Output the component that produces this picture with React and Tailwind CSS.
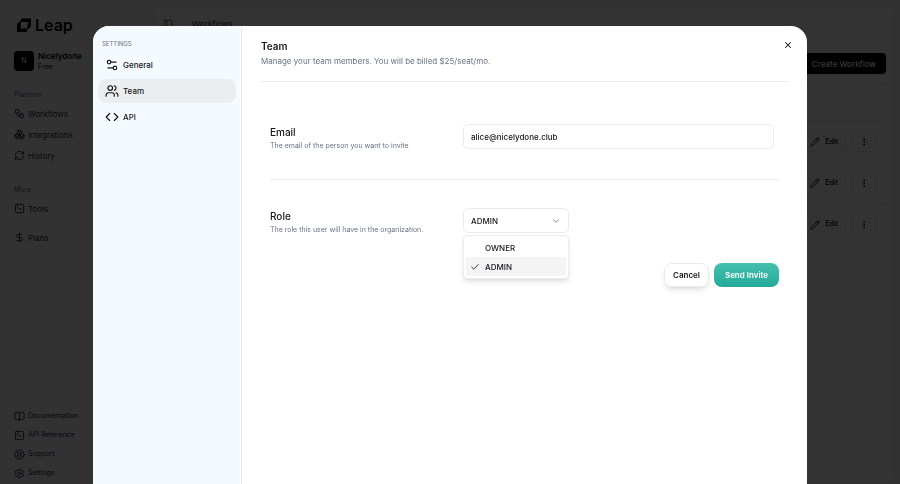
import { useState } from "react";
import {
  BookOpen,
  Boxes,
  Check,
  ChevronDown,
  Code,
  DollarSign,
  EllipsisVertical,
  LifeBuoy,
  PanelLeft,
  Pencil,
  RefreshCw,
  Settings,
  Settings2,
  SquareTerminal,
  Users,
  Workflow,
  X,
} from "lucide-react";

const platformLinks = [
  { label: "Workflows", icon: Workflow },
  { label: "Integrations", icon: Boxes },
  { label: "History", icon: RefreshCw },
];

const supportLinks = [
  { label: "Documentation", icon: BookOpen },
  { label: "API Reference", icon: SquareTerminal },
  { label: "Support", icon: LifeBuoy },
  { label: "Settings", icon: Settings },
];

const tabs = [
  { label: "General", icon: Settings2 },
  { label: "Team", icon: Users },
  { label: "API", icon: Code },
];

const roles = ["OWNER", "ADMIN"];

function Logo() {
  return (
    <div className="flex items-center gap-[3px] pl-[2px]">
      <svg viewBox="0 0 16 16" className="size-4" fill="currentColor">
        <path d="M6 1.500h9v6c0 3-1 4-4 4.500l1-7H4.500c0-2 .5-3.500 1.500-3.500z" />
        <path d="M10 15H1V9c0-3 1-4 4-4.500L4.500 11.500h7c0 2-.5 3.500-1.500 3.500z" />
      </svg>
      <span className="text-[16px] leading-5 font-semibold">Leap</span>
    </div>
  );
}

function SideLink({ label, icon: Icon }) {
  return (
    <a href="#" className="flex h-[21px] items-center gap-[3px] text-[8px] text-gray-800">
      <Icon className="size-[11px]" strokeWidth={2} />
      {label}
    </a>
  );
}

function Sidebar() {
  return (
    <aside className="flex w-[153px] shrink-0 flex-col px-[14px] pt-[15px] pb-px">
      <Logo />

      <div className="mt-4 flex items-center gap-1">
        <div className="flex size-5 items-center justify-center rounded bg-black text-[7px] text-white">N</div>
        <div>
          <p className="text-[8px] leading-[11px] font-semibold">Nicelydone</p>
          <p className="text-[7px] leading-[9px]">Free</p>
        </div>
      </div>

      <p className="mt-[19px] mb-[3px] text-[7px] leading-[10px] text-gray-500">Platform</p>
      <nav>
        {platformLinks.map((link) => <SideLink key={link.label} {...link} />)}
      </nav>

      <p className="mt-[19px] mb-[3px] text-[7px] leading-[10px] text-gray-500">More</p>
      <nav className="flex flex-col gap-2">
        <SideLink label="Tools" icon={SquareTerminal} />
        <SideLink label="Plans" icon={DollarSign} />
      </nav>

      <nav className="mt-auto">
        {supportLinks.map(({ label, icon: Icon }) => (
          <a key={label} href="#" className="flex h-[19px] items-center gap-[3px] text-[7px] text-gray-800">
            <Icon className="size-[11px]" strokeWidth={2} />
            {label}
          </a>
        ))}
      </nav>
    </aside>
  );
}

function WorkflowsPage() {
  return (
    <main className="mt-1 mr-[5px] flex-1 rounded-md border border-gray-200 bg-white">
      <header className="flex h-[38px] items-center gap-[9px] border-b border-gray-200 px-[9px] text-[8px] font-medium text-gray-600">
        <button aria-label="Toggle sidebar">
          <PanelLeft className="size-[10px]" />
        </button>
        <span className="h-3 w-px bg-gray-200" />
        <span>Workflows</span>
      </header>

      <div className="px-2">
        <div className="flex justify-end border-b border-gray-200 pt-[10px] pb-[9px]">
          <button className="h-[21px] rounded bg-black px-[10px] text-[8px] font-medium text-white">
            Create Workflow
          </button>
        </div>
        <div className="h-[38px] border-b border-gray-200" />
        {[1, 2, 3].map((row) => (
          <div key={row} className="flex h-[41px] items-center justify-end gap-[5px] border-b border-gray-200 pr-[10px] last:border-0">
            <button className="flex h-5 items-center gap-[5px] rounded border border-gray-200 px-[7px] text-[7px] font-medium">
              <Pencil className="size-[10px]" />
              Edit
            </button>
            <button aria-label="More" className="flex h-5 w-[25px] items-center justify-center rounded border border-gray-200">
              <EllipsisVertical className="size-[10px]" />
            </button>
          </div>
        ))}
      </div>
    </main>
  );
}

function RoleSelect() {
  const [role, setRole] = useState("ADMIN");
  const [open, setOpen] = useState(true);

  const pick = (value) => {
    setRole(value);
    setOpen(false);
  };

  // the native popup is replaced by the styled list below
  const toggle = (e) => {
    e.preventDefault();
    setOpen(!open);
  };

  return (
    <div className="relative w-[106px]">
      <select
        id="role"
        value={role}
        onChange={(e) => setRole(e.target.value)}
        onMouseDown={toggle}
        className="block h-[25px] w-full appearance-none rounded-[5px] border border-[#ebebeb] bg-white px-[7px] text-[8px] font-medium text-zinc-900 outline-none"
      >
        {roles.map((r) => <option key={r}>{r}</option>)}
      </select>
      <ChevronDown className="pointer-events-none absolute top-2 right-2 size-[10px] text-gray-500" />

      {open && (
        <ul role="listbox" aria-label="Role" className="absolute top-[27px] left-0 w-full rounded border border-[#ebebeb] bg-white p-[2px] shadow-md">
          {roles.map((r) => (
            <li key={r} role="option" aria-selected={r === role}>
              <button
                type="button"
                onClick={() => pick(r)}
                className={`flex h-[19px] w-full items-center gap-[5px] rounded-[3px] px-1 text-[8px] font-medium text-zinc-900 ${r === role ? "bg-[#f4f4f5]" : ""}`}
              >
                <span className="w-[10px]">{r === role && <Check className="size-[10px]" />}</span>
                {r}
              </button>
            </li>
          ))}
        </ul>
      )}
    </div>
  );
}

function SettingsModal() {
  const [tab, setTab] = useState("Team");
  const [email, setEmail] = useState("alice@nicelydone.club");

  return (
    <div className="fixed inset-0 flex bg-black/80 px-[93px] pt-[26px]">
      <div role="dialog" aria-label="Settings" className="flex flex-1 overflow-hidden rounded-t-2xl bg-white text-zinc-900">
        <aside className="w-[149px] shrink-0 border-r border-[#ebebeb] bg-[#f5fafe] px-[5px] pt-[13px]">
          <p className="mb-1 pl-1 text-[6px] leading-[10px] text-gray-500">SETTINGS</p>
          <nav className="flex flex-col gap-[2px]">
            {tabs.map(({ label, icon: Icon }) => (
              <button
                key={label}
                onClick={() => setTab(label)}
                className={`flex h-6 items-center gap-1 rounded-lg px-[7px] text-[8px] font-medium ${tab === label ? "bg-[#ebeef1]" : ""}`}
              >
                <Icon className="size-[14px]" strokeWidth={2} />
                {label}
              </button>
            ))}
          </nav>
        </aside>

        <section className="flex-1 px-[19px] pt-[13px]">
          <header className="flex items-start justify-between border-b border-[#ebebeb] pb-3">
            <div>
              <h2 className="text-[10px] leading-[14px] font-semibold">Team</h2>
              <p className="text-[8px] leading-4 text-gray-500">
                Manage your team members. You will be billed $25/seat/mo.
              </p>
            </div>
            <button aria-label="Close" className="-mr-[5px] pt-px">
              <X className="size-[10px]" strokeWidth={2.5} />
            </button>
          </header>

          <form className="px-[9px]" onSubmit={(e) => e.preventDefault()}>
            <div className="flex items-start border-b border-[#ebebeb] pt-[42px] pb-[27px]">
              <div className="w-[193px] shrink-0">
                <label htmlFor="email" className="block text-[10px] leading-[16px] font-medium">Email</label>
                <p className="text-[7px] leading-3 text-gray-500">The email of the person you want to invite</p>
              </div>
              <input
                id="email"
                type="email"
                value={email}
                onChange={(e) => setEmail(e.target.value)}
                className="mr-[5px] h-[25px] min-w-0 flex-1 rounded-[5px] border border-[#ebebeb] px-[7px] text-[8px] font-medium outline-none"
              />
            </div>

            <div className="flex items-start pt-7">
              <div className="w-[193px] shrink-0">
                <label htmlFor="role" className="block text-[10px] leading-[16px] font-medium">Role</label>
                <p className="text-[7px] leading-3 text-gray-500">The role this user will have in the organization.</p>
              </div>
              <RoleSelect />
            </div>

            <div className="mt-[27px] flex justify-end gap-[5px]">
              <button type="button" className="h-6 rounded-lg border border-[#ebebeb] px-2 text-[8px] font-semibold shadow-md">
                Cancel
              </button>
              <button type="submit" className="h-6 rounded-lg bg-linear-to-b from-[#45bfae] to-[#22ab9a] px-[11px] text-[8px] font-semibold text-white">
                Send Invite
              </button>
            </div>
          </form>
        </section>
      </div>
    </div>
  );
}

export default function App() {
  return (
    <div className="flex min-h-screen bg-[#fafafa] font-['Inter',sans-serif] text-black">
      <Sidebar />
      <WorkflowsPage />
      <SettingsModal />
    </div>
  );
}
